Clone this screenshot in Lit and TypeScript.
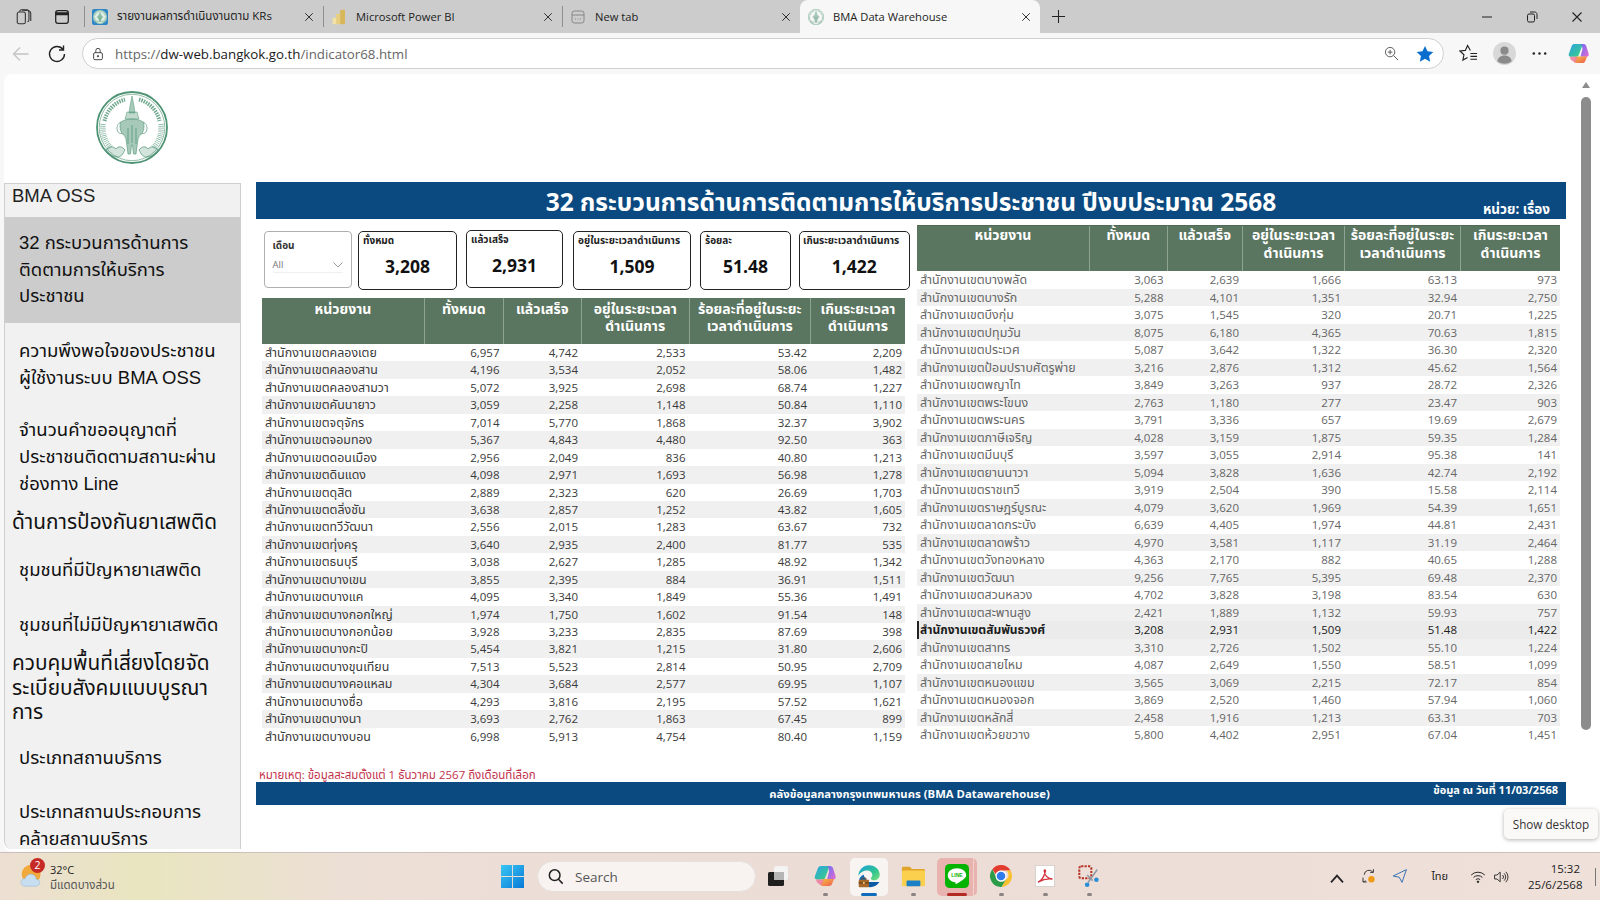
import { LitElement, html, css } from "lit";
import { customElement, property } from "lit/decorators.js";

type Row = [string, string, string, string, string, string];
const P = "สำนักงานเขต";
const parse = (s: string): Row[] =>
  s.trim().split("\n").map((l) => {
    const [n, a, b, c, d, e] = l.trim().split(" ");
    return [P + n, a, b, c, d, e] as Row;
  });

const LEFT = parse(`
คลองเตย 6,957 4,742 2,533 53.42 2,209
คลองสาน 4,196 3,534 2,052 58.06 1,482
คลองสามวา 5,072 3,925 2,698 68.74 1,227
คันนายาว 3,059 2,258 1,148 50.84 1,110
จตุจักร 7,014 5,770 1,868 32.37 3,902
จอมทอง 5,367 4,843 4,480 92.50 363
ดอนเมือง 2,956 2,049 836 40.80 1,213
ดินแดง 4,098 2,971 1,693 56.98 1,278
ดุสิต 2,889 2,323 620 26.69 1,703
ตลิ่งชัน 3,638 2,857 1,252 43.82 1,605
ทวีวัฒนา 2,556 2,015 1,283 63.67 732
ทุ่งครุ 3,640 2,935 2,400 81.77 535
ธนบุรี 3,038 2,627 1,285 48.92 1,342
บางเขน 3,855 2,395 884 36.91 1,511
บางแค 4,095 3,340 1,849 55.36 1,491
บางกอกใหญ่ 1,974 1,750 1,602 91.54 148
บางกอกน้อย 3,928 3,233 2,835 87.69 398
บางกะปิ 5,454 3,821 1,215 31.80 2,606
บางขุนเทียน 7,513 5,523 2,814 50.95 2,709
บางคอแหลม 4,304 3,684 2,577 69.95 1,107
บางซื่อ 4,293 3,816 2,195 57.52 1,621
บางนา 3,693 2,762 1,863 67.45 899
บางบอน 6,998 5,913 4,754 80.40 1,159`);

const RIGHT = parse(`
บางพลัด 3,063 2,639 1,666 63.13 973
บางรัก 5,288 4,101 1,351 32.94 2,750
บึงกุ่ม 3,075 1,545 320 20.71 1,225
ปทุมวัน 8,075 6,180 4,365 70.63 1,815
ประเวศ 5,087 3,642 1,322 36.30 2,320
ป้อมปราบศัตรูพ่าย 3,216 2,876 1,312 45.62 1,564
พญาไท 3,849 3,263 937 28.72 2,326
พระโขนง 2,763 1,180 277 23.47 903
พระนคร 3,791 3,336 657 19.69 2,679
ภาษีเจริญ 4,028 3,159 1,875 59.35 1,284
มีนบุรี 3,597 3,055 2,914 95.38 141
ยานนาวา 5,094 3,828 1,636 42.74 2,192
ราชเทวี 3,919 2,504 390 15.58 2,114
ราษฎร์บูรณะ 4,079 3,620 1,969 54.39 1,651
ลาดกระบัง 6,639 4,405 1,974 44.81 2,431
ลาดพร้าว 4,970 3,581 1,117 31.19 2,464
วังทองหลาง 4,363 2,170 882 40.65 1,288
วัฒนา 9,256 7,765 5,395 69.48 2,370
สวนหลวง 4,702 3,828 3,198 83.54 630
สะพานสูง 2,421 1,889 1,132 59.93 757
สัมพันธวงศ์ 3,208 2,931 1,509 51.48 1,422
สาทร 3,310 2,726 1,502 55.10 1,224
สายไหม 4,087 2,649 1,550 58.51 1,099
หนองแขม 3,565 3,069 2,215 72.17 854
หนองจอก 3,869 2,520 1,460 57.94 1,060
หลักสี่ 2,458 1,916 1,213 63.31 703
ห้วยขวาง 5,800 4,402 2,951 67.04 1,451`);

const HEAD = ["หน่วยงาน", "ทั้งหมด", "แล้วเสร็จ", "อยู่ในระยะเวลา ดำเนินการ", "ร้อยละที่อยู่ในระยะ เวลาดำเนินการ", "เกินระยะเวลา ดำเนินการ"];

const seal = (c = "#4f9474") => html`<svg viewBox="0 0 72 73" class="seal" fill="none" stroke=${c}>
  <ellipse cx="36" cy="36.5" rx="35" ry="35.500" stroke-width="1.800"/>
  <ellipse cx="36" cy="36.5" rx="32.800" ry="33.200" stroke-width=".6"/>
  <path d="M8.500 30A28.500 28.500 0 0 1 29 8.500M43 8.500A28.500 28.500 0 0 1 63.500 30" stroke-width="4" stroke-dasharray="1.500 1" opacity=".8"/>
  <path d="M7 33A29.500 29.500 0 0 0 15 57M65 33A29.500 29.500 0 0 1 57 57" stroke-width="5.500" stroke-dasharray=".7 1.200" opacity=".75"/>
  <path d="M36 5l1.800 9 1.200 8h-6l1.200-8z" fill=${c} fill-opacity=".5" stroke-width=".5"/>
  <path d="M31 21h10l2 7H29z" fill=${c} fill-opacity=".35" stroke-width=".5"/>
  <path d="M25 31c5-4 17-4 22 0 2 4 1 10-2.500 13-1.500 1-2 2.500-2.500 4l-2 15h-2.500l-1-9h-1l-1 9H32l-2-15c-.5-1.500-1-3-2.500-4C24 41 23 35 25 31z" fill=${c} fill-opacity=".5" stroke-width=".6"/>
  <path d="M25 31c-3 1-5 5-3.500 9 .8 2 2.500 3 4.500 2.500M47 31c3 1 5 5 3.500 9-.8 2-2.500 3-4.500 2.500M32 37v16M40 37v16M36 34v18" stroke-width=".7"/>
  <path d="M10 59c3-4 7-4 10-1 2-3 6-3 9 1-2 4-4 7-7 7-5 0-9-3-12-7zM62 59c-3-4-7-4-10-1-2-3-6-3-9 1 2 4 4 7 7 7 5 0 9-3 12-7z" fill=${c} fill-opacity=".25" stroke-width=".7"/>
</svg>`;

const I = {
  collections: html`<svg viewBox="0 0 20 20" fill="none" stroke="#333" stroke-width="1.200"><rect x="2.500" y="4.500" width="9" height="13" rx="2"/><path d="M5 4c.4-1.400 1-2 2.400-2H13c1.500 0 2.500 1 2.500 2.500v8.500c0 1-.5 2-1.600 2.300"/><path d="M8 2.500c3 0 9.500 0 9.500 3v9"/></svg>`,
  tabs: html`<svg viewBox="0 0 20 20" fill="none" stroke="#222" stroke-width="1.400"><rect x="3" y="3" width="14" height="14" rx="2.500"/><path d="M3.500 5.500h13v1.800h-13z" fill="#222"/></svg>`,
  pbi: html`<svg viewBox="0 0 20 20"><rect x="2" y="11" width="4.500" height="8" fill="#f2e3a5"/><rect x="6.500" y="6" width="5" height="13" fill="#e9cf7d"/><rect x="11.500" y="1" width="6" height="18" rx="1" fill="#d8b65a"/></svg>`,
  newtab: html`<svg viewBox="0 0 20 20" fill="none" stroke="#777" stroke-width="1"><rect x="2.500" y="2.500" width="15" height="15" rx="3"/><path d="M2.500 7.500h15"/><path d="M6.500 12.500h1M9.500 12.500h1M12.500 12.500h1" stroke-width="1.300"/></svg>`,
  x: html`<svg viewBox="0 0 12 12" fill="none" stroke="#222" stroke-width="1.100"><path d="M1.500 1.500l9 9M10.500 1.500l-9 9"/></svg>`,
  plus: html`<svg viewBox="0 0 16 16" fill="none" stroke="#222" stroke-width="1.100"><path d="M8 1v14M1 8h14"/></svg>`,
  min: html`<svg viewBox="0 0 12 12" stroke="#222" fill="none"><path d="M1 6h10"/></svg>`,
  restore: html`<svg viewBox="0 0 12 12" stroke="#222" fill="none"><rect x="1.500" y="3" width="7" height="8" rx="1.500"/><path d="M4 1h4.500c1.500 0 2.500 1 2.500 2.500V8"/></svg>`,
  back: html`<svg viewBox="0 0 20 20" stroke="#c4c4c4" fill="none" stroke-width="1.300"><path d="M17.500 10H3M9 3.500L2.500 10 9 16.500"/></svg>`,
  reload: html`<svg viewBox="0 0 20 20" stroke="#222" fill="none" stroke-width="1.400"><path d="M16 5.500A7.500 7.500 0 1 0 17.500 10"/><path d="M16.500 1.500v4.500H12"/></svg>`,
  lock: html`<svg viewBox="0 0 16 16" stroke="#444" fill="none" stroke-width="1.100"><rect x="3" y="6.500" width="10" height="8" rx="1.500"/><path d="M5.500 6.500V4a2.500 2.500 0 0 1 5 0v2.500"/><circle cx="8" cy="10.500" r=".8" fill="#444"/></svg>`,
  zoom: html`<svg viewBox="0 0 16 16" stroke="#555" fill="none" stroke-width="1"><circle cx="6.500" cy="6.500" r="5"/><path d="M10.200 10.200L15 15M6.500 4v5M4 6.500h5"/></svg>`,
  star: html`<svg viewBox="0 0 20 20" fill="#0a6ecf"><path d="M10 1l2.800 5.900 6.400.8-4.700 4.400 1.200 6.400L10 15.400l-5.700 3.100 1.200-6.400L.8 7.700l6.400-.8z"/></svg>`,
  fav: html`<svg viewBox="0 0 20 20" stroke="#222" fill="none" stroke-width="1.200"><path d="M12 6.800L9 1.500 6.700 6.700l-5.700.7 4.200 3.900-1.100 5.600 4.900-2.800M12 10h7M12 13h7M12 16h7"/></svg>`,
  avatar: html`<svg viewBox="0 0 24 24"><circle cx="12" cy="12" r="12" fill="#d8d8d8"/><circle cx="12" cy="9" r="4.300" fill="#8a8a8a"/><path d="M4.500 20c1-4.500 4-6 7.500-6s6.500 1.500 7.500 6a12 12 0 0 1-15 0z" fill="#8a8a8a"/></svg>`,
  dots: html`<svg viewBox="0 0 20 20" fill="#222"><circle cx="4" cy="10" r="1.300"/><circle cx="10" cy="10" r="1.300"/><circle cx="16" cy="10" r="1.300"/></svg>`,
  copilot: html`<svg viewBox="0 0 24 24"><defs><linearGradient id="cpa" x1="0" y1="0" x2="1" y2="1"><stop offset="0" stop-color="#2aa4e8"/><stop offset="1" stop-color="#3ccf7a"/></linearGradient><linearGradient id="cpb" x1="0" y1="0" x2="1" y2="1"><stop offset="0" stop-color="#6a6ff5"/><stop offset="1" stop-color="#e76ad0"/></linearGradient><linearGradient id="cpc" x1="0" y1="0" x2="1" y2="1"><stop offset="0" stop-color="#f7c33a"/><stop offset="1" stop-color="#ef5a55"/></linearGradient></defs><path d="M8 2h6c1 0 1.600.6 2 1.700L12 14c-.4 1-1 1.500-2 1.500H4C2 15.500 1.300 14 2 12l3-8c.5-1.300 1.600-2 3-2z" fill="url(#cpa)"/><path d="M14 2h3c1.400 0 2.500.7 3 2l2.500 8c.6 2-.2 3.500-2.200 3.500H14l2-7.500c.4-2-.4-5-2-6z" fill="url(#cpb)"/><path d="M10 22h6c1.400 0 2.500-.7 3-2l2-5H9L7 20.500C8 21.500 9 22 10 22z" fill="url(#cpc)"/><path d="M3 15.500h8l-2.500 5.800C5 20 3 18 3 15.500z" fill="#f07fa0" opacity=".9"/></svg>`,
  weather: html`<svg viewBox="0 0 28 30"><circle cx="13" cy="13" r="11" fill="#f2a93b"/><path d="M6 27c-3 0-5-2-5-4.500S3 18 6 18c1-3 3.500-5 6.500-5 4 0 6.500 3 6.500 6 2.500 0 4 1.700 4 4s-2 4-4.500 4z" fill="#c7ddf0" stroke="#8fb6d8" stroke-width=".6"/></svg>`,
  win: html`<svg viewBox="0 0 24 24"><defs><linearGradient id="wn" x1="0" y1="0" x2="1" y2="1"><stop offset="0" stop-color="#38c7f5"/><stop offset="1" stop-color="#0a79d6"/></linearGradient></defs><path d="M0 0h11.500v11.500H0zM12.500 0H24v11.500H12.500zM0 12.500h11.500V24H0zM12.500 12.500H24V24H12.500z" fill="url(#wn)"/></svg>`,
  search: html`<svg viewBox="0 0 18 18" stroke="#222" fill="none" stroke-width="1.700"><circle cx="7.500" cy="7.500" r="6"/><path d="M11.800 12l4.700 5"/></svg>`,
  taskview: html`<svg viewBox="0 0 24 24"><rect x="8" y="2" width="14" height="14" rx="2" fill="#f3f3f3"/><rect x="2" y="8" width="16" height="14" rx="1.500" fill="#1f1f1f"/><rect x="8" y="8" width="10" height="8" fill="#b5b5b5"/></svg>`,
  edge: html`<svg viewBox="0 0 28 28"><defs><linearGradient id="eg" x1="0" y1="0" x2="1" y2="1"><stop offset="0" stop-color="#1aa0dd"/><stop offset=".6" stop-color="#31c58e"/><stop offset="1" stop-color="#7fe07a"/></linearGradient></defs><path d="M1.500 14C2 6.500 7.500 1.500 14 1.500c7.500 0 12.500 5.500 12.500 11 0 4-3 6.500-6.500 6.500-2.300 0-3.700-.9-3.700-2.200 0-1 1.600-1.800 1.600-4 0-3-2.800-5.300-6.200-5.300-5 0-8.500 3-10.200 6.500z" fill="url(#eg)"/><path d="M8 12.500c-3 1-5.500 3.500-5.500 6.500 0 1 .2 2 .5 3h8l1-2.500C10 17 8 15 8 12.500z" fill="#0f6cbd"/><path d="M14 21h12c-2 3.500-6 6-11 6-1 0-2-.1-3-.4z" fill="#0b5aa5"/><rect x="2" y="18.500" width="12" height="8.500" rx="1" fill="#a5682a"/><path d="M5.500 18.500v-2h5v2" stroke="#7a4a1a" fill="none"/><rect x="2" y="21.500" width="12" height="1.200" fill="#5f3a14"/><rect x="7" y="21" width="2" height="2.200" fill="#f1c36c"/></svg>`,
  folder: html`<svg viewBox="0 0 26 24"><path d="M1 3.500C1 2.500 1.700 2 2.500 2h7l2.500 2.500h12.500c.8 0 1.500.7 1.500 1.500v3H1z" fill="#e0a52a"/><rect x="1" y="6" width="25" height="17" rx="1.500" fill="#fbd04f"/><rect x="6" y="17" width="15" height="6" rx="1" fill="#1c80c8"/></svg>`,
  line: html`<svg viewBox="0 0 26 26"><rect width="26" height="26" rx="5" fill="#06b300"/><path d="M13 4.500c-5.500 0-10 3.400-10 7.700 0 3.700 3.300 6.900 8 7.600.6.100.6.700.4 1.600 0 .5.300.6.800.3 3-1.800 11-6 10.800-9.500 0-4.300-4.500-7.700-10-7.700z" fill="#fff"/><text x="13" y="14.500" text-anchor="middle" font-family="Liberation Sans" font-size="5.500" font-weight="700" fill="#06b300">LINE</text></svg>`,
  chrome: html`<svg viewBox="0 0 24 24"><path d="M12 1a11 11 0 0 1 9.530 5.500H12a5.500 5.500 0 0 0-5.200 3.700L3.300 5.300A11 11 0 0 1 12 1z" fill="#e33b2e"/><path d="M21.530 6.500A11 11 0 0 1 12.500 23l4.300-7.300a5.500 5.500 0 0 0 .4-9.200z" fill="#fbc02d"/><path d="M3.300 5.300A11 11 0 0 0 12.500 23l4.300-7.400a5.500 5.500 0 0 1-9.900-3z" fill="#2a9b47"/><circle cx="12" cy="12" r="5.500" fill="#fff"/><circle cx="12" cy="12" r="4.300" fill="#2f7bea"/></svg>`,
  pdf: html`<svg viewBox="0 0 24 24"><rect x="2.500" y="1.500" width="19" height="21" fill="#fff" stroke="#d9d3cf"/><path d="M5 18c3-1 6-5 7.500-11 .3-1.500-1.500-1.500-1.300 0 .5 4 3 7.500 8.300 8-3.500-.5-9 0-14 3z" fill="none" stroke="#d2303a" stroke-width="1.300"/></svg>`,
  snip: html`<svg viewBox="0 0 26 26" fill="none"><rect x="2.500" y="2.500" width="13" height="13" rx="2" stroke="#b53224" stroke-width="2.200" stroke-dasharray="2.400 1.300"/><path d="M11 12l6 6M22 6L12 20" stroke="#8f9aa5" stroke-width="1.600"/><circle cx="21" cy="17" r="2.500" fill="#2b8fd6"/><circle cx="11" cy="22.500" r="2.500" fill="#2b8fd6"/></svg>`,
  tray: html`<svg viewBox="0 0 20 20" fill="none" stroke="#333" stroke-width="1.200"><path d="M4 8.500A6 6 0 0 1 15 5.500M15.500 1.500v4h-4"/><path d="M2.500 12v5.500H7M3 17a6 6 0 0 0 3-1"/><circle cx="13" cy="14" r="4" fill="#f09a1a" stroke="none"/></svg>`,
  send: html`<svg viewBox="0 0 20 20" fill="none" stroke="#2f6fb3" stroke-width="1.200"><path d="M18 2L1.500 10l7.500 1.500L12.500 18z"/></svg>`,
  caret: html`<svg viewBox="0 0 12 12" fill="none" stroke="#222" stroke-width="1.300"><path d="M1.500 8.500L6 3.500l4.500 5"/></svg>`,
  wifi: html`<svg viewBox="0 0 20 20" fill="none" stroke="#222" stroke-width="1.200"><path d="M1.500 7.500a12 12 0 0 1 17 0M4.500 10.500a8 8 0 0 1 11 0M7.300 13.300a4 4 0 0 1 5.400 0"/><circle cx="10" cy="16" r="1" fill="#222"/></svg>`,
  speaker: html`<svg viewBox="0 0 20 20" fill="none" stroke="#222" stroke-width="1.100"><path d="M2 7.500v5h3l4 3.500V4L5 7.500zM12 7.500a3.500 3.500 0 0 1 0 5M14 5.500a6.500 6.500 0 0 1 0 9M16 3.500a9 9 0 0 1 0 13"/></svg>`,
};

@customElement("data-table")
class DataTable extends LitElement {
  @property({ attribute: false }) rows: Row[] = [];
  @property() variant = "left";
  @property({ type: Number }) selected = -1;

  static styles = css`
    :host { display: block; width: 643px; font-family: "Open Sans", "Noto Sans Thai", "Noto Sans", sans-serif; }
    .row { display: grid; }
    .left .row { grid-template-columns: 162px 78.500px 78.500px 107.500px 121.500px 95px; }
    .right .row { grid-template-columns: 172px 77.500px 75.500px 102px 116px 100px; }
    .head { background: #5a7560; height: 46px; }
    .right .head { border-top: 1px solid #4f6a55; box-sizing: border-box; }
    .h { color: #fff; font-weight: 700; font-size: 14px; line-height: 17px; text-align: center; padding-top: 1.500px; border-left: 1px solid #8fa395; box-sizing: border-box; }
    .right .h { padding-top: 0; line-height: 18px; }
    .h:first-child { border-left: 0; }
    .h span { display: block; white-space: nowrap; }
    .r { height: 17.500px; line-height: 17.500px; font-size: 11.500px; color: #3a3a3a; }
    .left .r { height: 17.450px; line-height: 17.450px; }
    .right .r { color: #666; }
    .r:nth-child(even) { background: #f0f0f0; }
    .c { text-align: right; padding-right: 3px; white-space: nowrap; overflow: hidden; }
    .n { text-align: left; padding: 0 0 0 3px; font-size: 12.400px; }
    .right .r.sel { background: #ebebeb; color: #1c1c1c; }
    .r.sel .n { font-weight: 700; font-size: 12px; border-left: 2px solid #222; padding-left: 1px; }
  `;

  render() {
    return html`<div class=${this.variant}>
      <div class="row head">
        ${HEAD.map((h) => html`<div class="h">${h.split(" ").map((p) => html`<span>${p}</span>`)}</div>`)}
      </div>
      <div>
        ${this.rows.map((r, i) => html`<div class="row r ${i === this.selected ? "sel" : ""}">
          ${r.map((v, j) => html`<div class="c ${j === 0 ? "n" : ""}">${v}</div>`)}
        </div>`)}
      </div>
    </div>`;
  }
}

@customElement("app-root")
class AppRoot extends LitElement {
  static styles = css`
    :host { display: block; width: 1600px; height: 900px; overflow: hidden; position: relative; background: #f7f7f7; font-family: "Open Sans", "Noto Sans Thai", "Noto Sans", sans-serif; color: #222; }
    svg { display: block; }
    .seal { width: 100%; height: 100%; }

    /* tab strip */
    .strip { height: 33px; background: #cccccc; display: flex; align-items: stretch; }
    .strip-tools { width: 84px; display: flex; align-items: center; padding-left: 15px; gap: 20px; box-sizing: border-box; }
    .strip-tools svg { width: 18px; height: 18px; }
    .tab { width: 239px; display: flex; align-items: center; box-sizing: border-box; border-left: 1px solid #8e8e8e; margin: 6px 0; padding: 0 9px 0 7px; font-size: 11.200px; color: #222; }
    .tab.t4 { width: 240px; margin: 0; height: 33px; background: #f7f7f7; border: 0; border-radius: 8px 8px 0 0; padding: 0 9px 0 8px; }
    .tab.t3 { width: 238px; }
    .tab .fav { width: 16px; height: 16px; flex: none; margin-right: 9px; }
    .tab .fav.blue { background: #2d86c6; border-radius: 2px; padding: 1px; box-sizing: border-box; }
    .tab .fav.blue .seal { background: #dff0e6; border-radius: 50%; }
    .tab .lbl { flex: 1; white-space: nowrap; overflow: hidden; }
    .tab .lbl.thai { font-size: 11.500px; }
    .tab .cl { width: 10px; height: 10px; flex: none; }
    .plus { width: 15px; height: 15px; align-self: center; margin-left: 11px; }
    .winc { margin-left: auto; display: flex; align-items: center; gap: 33px; padding-right: 17px; }
    .winc svg { width: 12px; height: 12px; }

    /* toolbar */
    .toolbar { height: 41px; display: flex; align-items: center; box-sizing: border-box; padding: 0 0 0 11px; }
    .tb-btn { width: 20px; height: 20px; flex: none; }
    .tb-btn.reload { margin-left: 16px; }
    .addr { width: 1362px; height: 31px; margin-left: 15px; box-sizing: border-box; background: #fff; border: 1px solid #d0d0d0; border-radius: 16px; display: flex; align-items: center; padding: 0 9px 0 7px; flex: none; }
    .addr .lock { width: 14px; height: 14px; margin-right: 10px; margin-left: 1px; }
    .url { font-size: 13.300px; color: #666; flex: 1; white-space: nowrap; }
    .url b { font-weight: 400; color: #1a1a1a; }
    .addr .z { width: 15px; height: 15px; margin-right: 17px; }
    .addr .st { width: 18px; height: 18px; }
    .tb-right { display: flex; align-items: center; margin-left: 15px; gap: 17px; }
    .tb-right svg { width: 19px; height: 19px; }
    .tb-right .av { width: 23px; height: 23px; margin-left: -2px; }
    .tb-right .dt { margin-left: -3px; }
    .tb-right .cp { width: 23px; height: 23px; margin-left: 1px; }
    .tb-right .cp svg { width: 23px; height: 23px; }
    .tb-right .av svg { width: 23px; height: 23px; }

    /* page */
    .page { height: 778px; background: #fff; border-radius: 8px 0 0 8px; margin-left: 4px; display: flex; flex-direction: column; position: relative; }
    .top { height: 109px; flex: none; padding: 17px 0 0 92px; box-sizing: border-box; }
    .logo { width: 72px; height: 73px; }
    .columns { display: flex; flex: 1; min-height: 0; }

    /* sidebar */
    .side { width: 237px; height: 666px; flex: none; background: #f1f1f1; border: 1px solid #cfcfcf; border-width: 1px 1px 0 1px; box-sizing: border-box; overflow: hidden; border-radius: 0 0 0 8px; font-family: "Liberation Sans", "Noto Sans Thai", sans-serif; color: #111; }
    .side h3 { margin: 0; font-size: 20.800px; font-weight: 400; line-height: 24.500px; padding-left: 7px; }
    .side h3.brand { height: 33px; font-size: 18.500px; color: #222; }
    .side a { display: block; font-size: 18.500px; line-height: 26.670px; padding: 13px 8px 13px 14px; white-space: nowrap; }
    .side a.on { background: #ccc; }
    .side a.m2 { margin-top: 2px; }
    .side a.m7 { margin-top: 7px; }
    .side a.m9 { margin-top: 9px; }

    /* main */
    .main { width: 1310px; margin-left: 15px; display: flex; flex-direction: column; flex: none; }
    .title { height: 37px; background: #0b4a80; color: #fff; display: grid; grid-template-columns: 1fr auto 1fr; align-items: center; flex: none; margin-top: -1px; }
    .title .t { grid-column: 2; font-size: 24.500px; font-weight: 700; white-space: nowrap; padding-top: 3px; }
    .title .u { grid-column: 3; justify-self: end; align-self: end; padding: 0 16px 2px 0; font-size: 13.500px; font-weight: 700; white-space: nowrap; }
    .grid { display: flex; height: 548px; flex: none; }
    .lc { width: 661px; flex: none; padding: 12px 0 0 6px; box-sizing: border-box; }
    .rc { width: 643px; flex: none; padding-top: 6px; }
    .cards { display: flex; align-items: flex-start; height: 67px; margin-left: 1.500px; width: 660px; }
    .slicer { width: 88.500px; height: 57px; flex: none; box-sizing: border-box; border: 1px solid #b0b0b0; border-radius: 4px; padding: 5px 8px; }
    .slicer .k { font-size: 10px; font-weight: 700; color: #333; line-height: 16px; }
    .slicer .sel { height: 15px; margin-top: 4px; display: flex; align-items: center; justify-content: space-between; font-size: 9.500px; color: #777; border-bottom: 1px solid #f0f0f0; }
    .slicer svg { width: 10px; height: 6px; }
    .card { height: 59px; flex: none; box-sizing: border-box; border: 1.500px solid #222; border-radius: 5px; background: #fff; padding: 2px 4px; color: #111; }
    .card .k { font-size: 10px; font-weight: 700; line-height: 13px; white-space: nowrap; color: #222; }
    .card .v { font-size: 17.500px; font-weight: 700; text-align: center; line-height: 26px; margin-top: 6px; }
    .c1 { width: 99px; margin-left: 6px; }
    .c2 { width: 97px; margin-left: 9px; height: 58px; margin-top: -1px; }
    .c3 { width: 118px; margin-left: 10px; }
    .c4 { width: 91px; margin-left: 9px; }
    .c5 { width: 110.500px; margin-left: 8px; padding: 2px 3px; }
    .note { flex: none; height: 15px; line-height: 15px; font-size: 11.500px; color: #c2314b; padding-left: 3px; white-space: nowrap; }
    .foot { flex: none; height: 23px; background: #0b4a80; color: #fff; display: grid; grid-template-columns: 1fr auto 1fr; font-size: 11.300px; font-weight: 700; }
    .foot .ft { grid-column: 2; line-height: 23px; padding-right: 3px; }
    .foot .d { grid-column: 3; justify-self: end; padding: 0 8px 0 0; line-height: 16px; font-size: 11px; }

    /* scrollbar */
    .sb { width: 17px; flex: none; margin-left: 11px; display: flex; flex-direction: column; align-items: center; height: 100%; margin-top: -109px; padding-top: 8px; box-sizing: border-box; }
    .sb i { display: block; width: 0; height: 0; border: 4.500px solid transparent; border-top: 0; border-bottom: 6px solid #8c8c8c; }
    .sb b { display: block; width: 10px; height: 633px; margin-top: 9px; background: #8c8c8c; border-radius: 5px; }

    .tip { position: absolute; left: 1500px; top: 735px; width: 94px; height: 30px; background: #fbf9f8; border-radius: 5px; box-shadow: 0 1px 4px rgba(0,0,0,.3); font-size: 11.700px; line-height: 30px; text-align: center; white-space: nowrap; color: #333; }

    /* taskbar */
    .task { height: 48px; border-top: 1px solid #c9c0bb; box-sizing: border-box; background: linear-gradient(90deg, #ecdfd3 0%, #e9e5bf 9%, #ecdfd6 22%, #ecdcd6 50%, #efe0d9 100%); display: flex; align-items: center; }
    .weather { width: 501px; flex: none; display: flex; align-items: center; padding-left: 20px; box-sizing: border-box; position: relative; }
    .weather .ic { width: 24px; height: 27px; margin-right: 6px; }
    .badge { position: absolute; left: 30px; top: -4px; width: 15px; height: 15px; border-radius: 50%; background: #c62a26; color: #fff; font-size: 10.500px; line-height: 15px; text-align: center; }
    .w1 { font-size: 11px; line-height: 15px; color: #222; }
    .w2 { font-size: 11.500px; line-height: 15px; color: #555; }
    .start { width: 23px; height: 23px; flex: none; margin-right: 13px; }
    .search { width: 219px; height: 31px; flex: none; box-sizing: border-box; background: #f8f3f0; border-radius: 16px; border: 1px solid #e6e0dc; display: flex; align-items: center; padding-left: 10px; gap: 11px; font-size: 13.500px; color: #555; }
    .search svg { width: 16px; height: 17px; }
    .apps { display: flex; align-items: center; margin-left: 13px; }
    .app { width: 44px; height: 38px; display: flex; flex-direction: column; align-items: center; justify-content: flex-end; box-sizing: border-box; gap: 5px; border-radius: 5px; flex: none; }
    .app.tv { width: 18px; margin-right: 16px; }
    .app svg { width: 24px; height: 24px; }
    .app .dot { width: 5px; height: 3px; border-radius: 2px; background: #8a8380; flex: none; }
    .app.tv .dot { background: transparent; }
    .app.act { background: #f7f4f2; width: 38px; margin: 0 3px; }
    .app.act .dot { width: 16px; background: #0f6cbd; }
    .app.ln { background: linear-gradient(90deg, #e8b3ae 89%, #f1d2cc 89%, #f1d2cc 92%, #e8b3ae 92%); width: 40px; margin: 0 2px; }
    .app.ln .dot { width: 20px; background: #b32a23; }
    .tray { margin-left: auto; display: flex; align-items: center; }
    .tray svg { width: 16px; height: 16px; flex: none; }
    .tray .cr { width: 11px; height: 11px; margin-right: 21px; }
    .tray .rf { width: 18px; height: 18px; margin-right: 13px; }
    .tray .sd { width: 17px; height: 17px; margin-right: 22px; }
    .tray .th { font-size: 11px; margin-right: 22px; color: #222; }
    .tray .wf { margin-right: 7px; }
    .clock { margin-left: 19px; text-align: right; font-size: 11.500px; line-height: 16px; color: #222; width: 52px; }
    .sep { width: 1px; height: 18px; background: #777; margin: 0 4px 0 15px; }
  `;

  render() {
    return html`
      <div class="strip">
        <div class="strip-tools">${I.collections}${I.tabs}</div>
        <div class="tab"><div class="fav blue">${seal("#3f8a63")}</div><div class="lbl thai">รายงานผลการดำเนินงานตาม KRs</div><div class="cl">${I.x}</div></div>
        <div class="tab"><div class="fav">${I.pbi}</div><div class="lbl">Microsoft Power BI</div><div class="cl">${I.x}</div></div>
        <div class="tab t3"><div class="fav">${I.newtab}</div><div class="lbl">New tab</div><div class="cl">${I.x}</div></div>
        <div class="tab t4"><div class="fav">${seal()}</div><div class="lbl">BMA Data Warehouse</div><div class="cl">${I.x}</div></div>
        <div class="plus">${I.plus}</div>
        <div class="winc">${I.min}${I.restore}${I.x}</div>
      </div>
      <div class="toolbar">
        <div class="tb-btn">${I.back}</div>
        <div class="tb-btn reload">${I.reload}</div>
        <div class="addr">
          <div class="lock">${I.lock}</div>
          <div class="url">https://<b>dw-web.bangkok.go.th</b>/indicator68.html</div>
          <div class="z">${I.zoom}</div>
          <div class="st">${I.star}</div>
        </div>
        <div class="tb-right">${I.fav}<div class="av">${I.avatar}</div><div class="dt">${I.dots}</div><div class="cp">${I.copilot}</div></div>
      </div>
      <div class="page">
        <div class="top"><div class="logo">${seal()}</div></div>
        <div class="columns">
          <nav class="side">
            <h3 class="brand">BMA OSS</h3>
            <a class="on">32 กระบวนการด้านการ<br/>ติดตามการให้บริการ<br/>ประชาชน</a>
            <a class="m2">ความพึงพอใจของประชาชน<br/>ผู้ใช้งานระบบ BMA OSS</a>
            <a>จำนวนคำขออนุญาตที่<br/>ประชาชนติดตามสถานะผ่าน<br/>ช่องทาง Line</a>
            <h3>ด้านการป้องกันยาเสพติด</h3>
            <a class="m9">ชุมชนที่มีปัญหายาเสพติด</a>
            <a class="m2">ชุมชนที่ไม่มีปัญหายาเสพติด</a>
            <h3>ควบคุมพื้นที่เสี่ยงโดยจัด<br/>ระเบียบสังคมแบบบูรณา<br/>การ</h3>
            <a class="m7">ประเภทสถานบริการ</a>
            <a class="m2">ประเภทสถานประกอบการ<br/>คล้ายสถานบริการ</a>
          </nav>
          <div class="main">
            <div class="title"><div class="t">32 กระบวนการด้านการติดตามการให้บริการประชาชน ปีงบประมาณ 2568</div><div class="u">หน่วย: เรื่อง</div></div>
            <div class="grid">
              <div class="lc">
                <div class="cards">
                  <div class="slicer"><div class="k">เดือน</div><div class="sel"><span>All</span><svg viewBox="0 0 10 6" fill="none" stroke="#999"><path d="M.5.500L5 5 9.500.500"/></svg></div></div>
                  <div class="card c1"><div class="k">ทั้งหมด</div><div class="v">3,208</div></div>
                  <div class="card c2"><div class="k">แล้วเสร็จ</div><div class="v">2,931</div></div>
                  <div class="card c3"><div class="k">อยู่ในระยะเวลาดำเนินการ</div><div class="v">1,509</div></div>
                  <div class="card c4"><div class="k">ร้อยละ</div><div class="v">51.48</div></div>
                  <div class="card c5"><div class="k">เกินระยะเวลาดำเนินการ</div><div class="v">1,422</div></div>
                </div>
                <data-table .rows=${LEFT} variant="left"></data-table>
              </div>
              <div class="rc"><data-table .rows=${RIGHT} variant="right" selected="20"></data-table></div>
            </div>
            <div class="note">หมายเหตุ: ข้อมูลสะสมตั้งแต่ 1 ธันวาคม 2567 ถึงเดือนที่เลือก</div>
            <div class="foot"><div class="ft">คลังข้อมูลกลางกรุงเทพมหานคร (BMA Datawarehouse)</div><div class="d">ข้อมูล ณ วันที่ 11/03/2568</div></div>
          </div>
          <div class="sb"><i></i><b></b></div>
        </div>
        <div class="tip">Show desktop</div>
      </div>
      <div class="task">
        <div class="weather">
          <div class="ic">${I.weather}</div><div class="badge">2</div>
          <div><div class="w1">32°C</div><div class="w2">มีแดดบางส่วน</div></div>
        </div>
        <div class="start">${I.win}</div>
        <div class="search">${I.search}<span>Search</span></div>
        <div class="apps">
          <div class="app tv">${I.taskview}<div class="dot"></div></div>
          <div class="app">${I.copilot}<div class="dot"></div></div>
          <div class="app act">${I.edge}<div class="dot"></div></div>
          <div class="app">${I.folder}<div class="dot"></div></div>
          <div class="app ln">${I.line}<div class="dot"></div></div>
          <div class="app">${I.chrome}<div class="dot"></div></div>
          <div class="app">${I.pdf}<div class="dot"></div></div>
          <div class="app">${I.snip}<div class="dot"></div></div>
        </div>
        <div class="tray">
          <div class="cr">${I.caret}</div><div class="rf">${I.tray}</div><div class="sd">${I.send}</div>
          <span class="th">ไทย</span>
          <div class="wf">${I.wifi}</div>${I.speaker}
          <div class="clock">15:32<br/>25/6/2568</div><div class="sep"></div>
        </div>
      </div>
    `;
  }
}
void DataTable;
void AppRoot;
